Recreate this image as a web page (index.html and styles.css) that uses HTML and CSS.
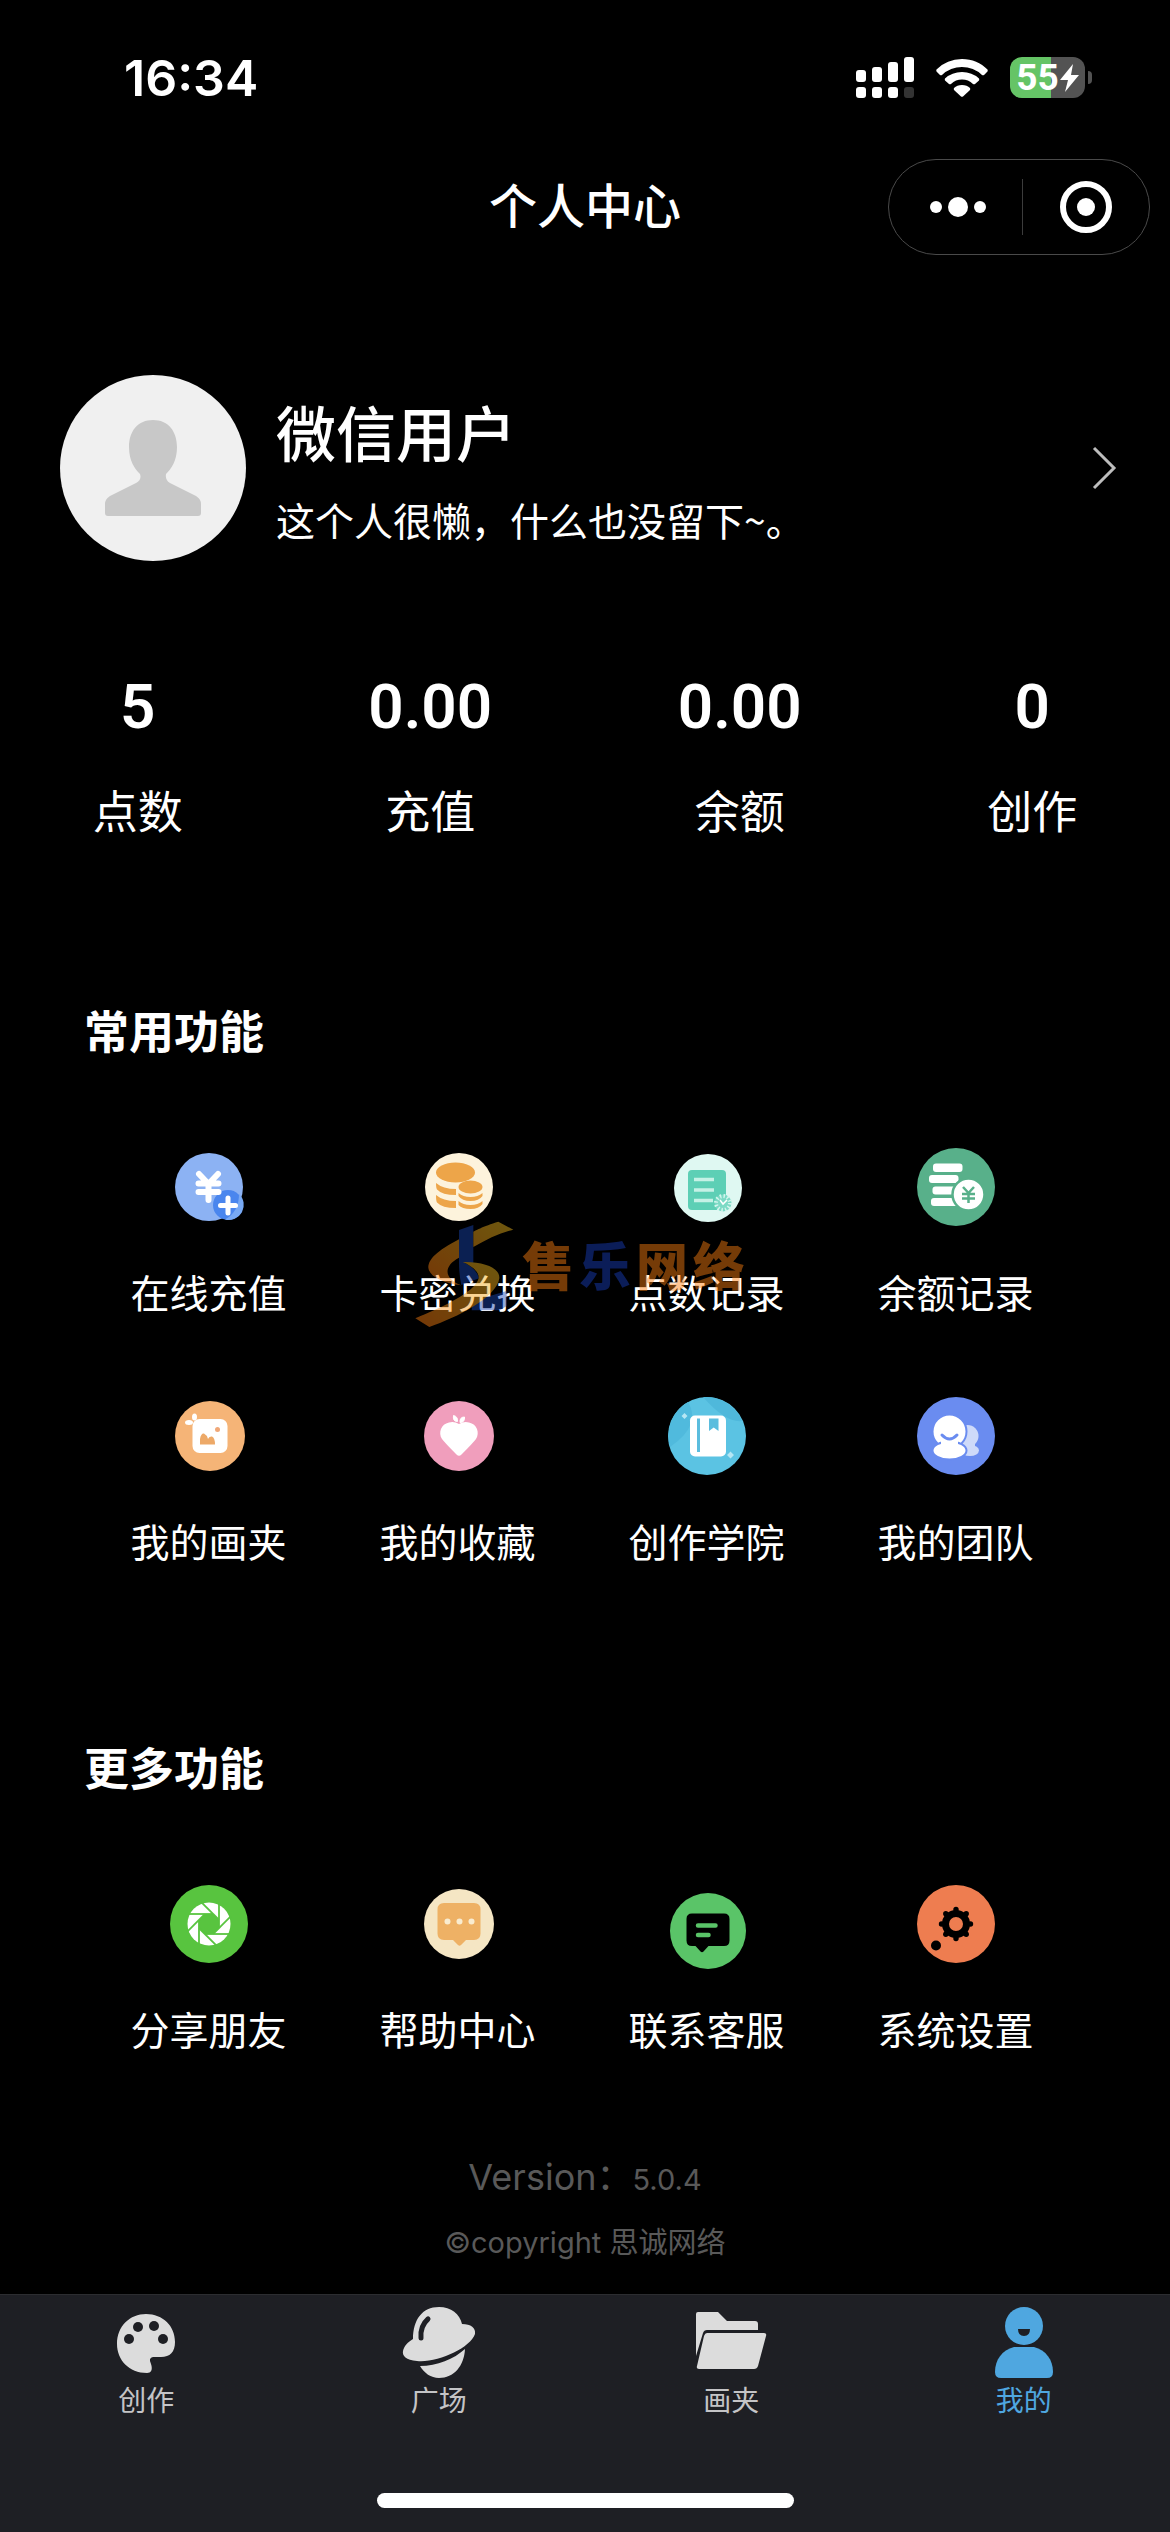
FILE: index.html
```html
<!DOCTYPE html>
<html lang="zh-CN">
<head>
<meta charset="utf-8">
<meta name="viewport" content="width=device-width, initial-scale=1">
<title>个人中心</title>
<link rel="stylesheet" href="styles.css">
</head>
<body>
<div class="status-bar">
  <time class="clock">16:34</time>
  <div class="status-icons">
    <svg class="signal" viewBox="0 0 58 41" fill="#fff">
      <rect x="0" y="13" width="10" height="12" rx="3"/><rect x="16" y="10" width="10" height="15" rx="3"/><rect x="32" y="5" width="10" height="20" rx="3"/><rect x="48" y="0" width="10" height="25" rx="3"/>
      <rect x="0" y="30" width="10" height="11" rx="3"/><rect x="16" y="30" width="10" height="11" rx="3"/><rect x="32" y="30" width="10" height="11" rx="3"/><rect x="48" y="30" width="10" height="11" rx="3" fill="#333"/>
    </svg>
    <svg class="wifi" viewBox="0 0 52 38" fill="#fff">
      <path d="M26 0C36 0 45 4 51.500 10.500Q52 11.500 51.500 12.500L48 16Q47 16.500 46 16A29 29 0 0 0 6 16Q5 16.500 4 16L.5 12.500Q0 11.500 .5 10.500A36 36 0 0 1 26 0Z"/>
      <path d="M26 13Q36 13 43 19.500Q43.500 20.500 43 21.500L39 25Q38 25.500 37 25A16 16 0 0 0 15 25Q14 25.500 13 25L9 21.500Q8.500 20.500 9 19.500Q16 13 26 13Z"/>
      <path d="M26 26Q31 26 34 29Q34.500 30 34 31L27 37.500Q26 38.200 25 37.500L18 31Q17.500 30 18 29Q21 26 26 26Z"/>
    </svg>
    <div class="battery">
      <span class="battery-body"><span>55</span>
        <svg class="bolt" viewBox="0 0 19 28" fill="#fff"><path d="M13 0L0 16h8L5 28 19 11h-8Z"/></svg>
      </span>
      <span class="battery-cap"></span>
    </div>
  </div>
</div>

<header class="nav-bar">
  <h1>个人中心</h1>
  <div class="capsule">
    <button class="more" type="button" aria-label="更多">
      <svg width="58" height="20" viewBox="0 0 58 20" fill="#fff"><circle cx="7" cy="10" r="6"/><circle cx="29" cy="10" r="10"/><circle cx="51" cy="10" r="6"/></svg>
    </button>
    <span class="capsule-line"></span>
    <button type="button" aria-label="关闭">
      <svg width="52" height="52" viewBox="0 0 52 52"><circle cx="26" cy="26" r="23" fill="none" stroke="#fff" stroke-width="6"/><circle cx="26" cy="26" r="9" fill="#fff"/></svg>
    </button>
  </div>
</header>

<main>
  <a class="profile" href="#profile">
    <svg class="avatar" viewBox="0 0 186 186">
      <circle cx="93" cy="93" r="93" fill="#f0f0f0"/>
      <path d="M93 45C108 45 117 56 117 72C117 86 111 94 106 99Q105 105 110 108L136 121Q141 124 141 129V138Q141 141 138 141H48Q45 141 45 138V129Q45 124 50 121L76 108Q82 105 80 99C75 94 69 86 69 72C69 56 78 45 93 45Z" fill="#c8c8c8"/>
    </svg>
    <span class="profile-text">
      <strong>微信用户</strong>
      <span>这个人很懒，什么也没留下~。</span>
    </span>
    <svg class="chevron" viewBox="0 0 24 42" fill="none" stroke="#bdbdbd" stroke-width="3"><path d="M2 1L22 21 2 41"/></svg>
  </a>

  <dl class="stats">
    <div><dd>5</dd><dt>点数</dt></div>
    <div><dd>0.00</dd><dt>充值</dt></div>
    <div><dd>0.00</dd><dt>余额</dt></div>
    <div><dd>0</dd><dt>创作</dt></div>
  </dl>

  <section class="group">
    <h2>常用功能</h2>
    <div class="grid">
      <a href="#recharge">
        <svg class="icon" viewBox="0 0 78 78">
          <circle cx="39" cy="39" r="34" fill="#8cb2f3"/>
          <circle cx="58" cy="57" r="15" fill="#4a86ee"/>
          <path d="M69 46a15 15 0 0 1-14 25.500Q69 64 69 46Z" fill="#78a9f4"/>
          <g fill="none" stroke="#fff" stroke-linecap="round" stroke-width="6"><path d="M29 26l9.500 10L48 26M28.500 35.500h20M28.500 44h20M38.500 36v16"/><path d="M50.500 57.500h15M58 50v15" stroke-width="5"/></g>
        </svg>
        <span>在线充值</span>
      </a>
      <a href="#redeem">
        <svg class="icon" viewBox="0 0 78 78">
          <circle cx="40" cy="39" r="34" fill="#fdf3dc"/>
          <g fill="#eda549"><ellipse cx="36.500" cy="24.500" rx="19.500" ry="10"/>
          <path d="M17 35Q24 41 37 41V47Q23 47 18 41.500Q17 40 17 35ZM17 47Q24 53 37 53V60Q23 60 18 54.500Q17 53 17 47Z"/>
          <ellipse cx="51.500" cy="39" rx="12" ry="6.500"/>
          <path d="M39.500 45Q44 49 51.500 49T63.500 45V48Q60 53 51.500 53T39.500 48ZM39.500 53Q44 57 51.500 57T63.500 53V56Q60 61 51.500 61T39.500 57Z"/></g>
        </svg>
        <span>卡密兑换</span>
      </a>
      <a href="#points">
        <svg class="icon" viewBox="0 0 78 78">
          <circle cx="40" cy="40" r="34" fill="#dff8f2"/>
          <rect x="20" y="22" width="38" height="40" rx="4" fill="#5dcfb5"/>
          <path d="M26 31.500h20M26 42h20M26 52.500h19" stroke="#c5f1e6" stroke-width="3.500"/>
          <circle cx="55" cy="55" r="8.500" fill="#7cdac5"/>
          <circle cx="55" cy="55" r="7" fill="none" stroke="#d4f6ee" stroke-width="4" stroke-dasharray="1.500 2.200"/>
          <path d="M52 52l3 4 4-4" fill="none" stroke="#fff" stroke-width="1.500"/>
        </svg>
        <span>点数记录</span>
      </a>
      <a href="#balance">
        <svg class="icon" viewBox="0 0 78 78">
          <circle cx="39" cy="39" r="39" fill="#58b08a"/>
          <g fill="#fff"><rect x="16" y="15.500" width="29.500" height="8.500" rx="3"/><rect x="12" y="27" width="29.500" height="8" rx="3"/><rect x="15.500" y="38.500" width="24" height="8" rx="3"/><rect x="14" y="50" width="28" height="8" rx="3"/></g>
          <circle cx="51.500" cy="46.500" r="16" fill="#fff" stroke="#58b08a" stroke-width="2.500"/>
          <path d="M46 39l5.500 6 5.500-6M45 46h13M45 50.500h13M51.500 45v10" fill="none" stroke="#58b08a" stroke-width="2.500"/>
        </svg>
        <span>余额记录</span>
      </a>
      <a href="#albums">
        <svg class="icon" viewBox="0 0 78 78">
          <circle cx="40" cy="39" r="35" fill="#f5b477"/>
          <rect x="22.500" y="22" width="35" height="34" rx="7" fill="#fff"/>
          <g fill="#fff"><ellipse cx="19" cy="25.500" rx="4" ry="2.500"/><ellipse cx="24.500" cy="20" rx="2.500" ry="3.500"/></g>
          <path d="M30 47.500V42Q31 36 34 36.500Q37 38 38 42Q39 39 42 39.500Q45 41 45 47.500Z" fill="#eda968"/><circle cx="47.500" cy="32.500" r="2.500" fill="#f0a878"/>
        </svg>
        <span>我的画夹</span>
      </a>
      <a href="#favorites">
        <svg class="icon" viewBox="0 0 78 78">
          <circle cx="40" cy="39" r="35" fill="#f09ebc"/>
          <path d="M40 27Q45 24 50 25.500C58 27 61 36 57 42Q54 46 42.500 57.500Q40 60 37.500 57.500Q26 46 23 42C19 36 22 27 30 25.500Q35 24 40 27Z" fill="#fff"/>
          <path d="M34.500 18.500q4.500 1 4 6-5 0-4-6ZM45.500 20q-5 0-4.500 5.500 5 0 4.500-5.500Z" fill="#fff" stroke="#fff"/>
        </svg>
        <span>我的收藏</span>
      </a>
      <a href="#academy">
        <svg class="icon" viewBox="0 0 78 78">
          <circle cx="39" cy="39" r="39" fill="#5bc3e3"/>
          <path d="M2 50A39 39 0 0 1 20 5Q34 28 2 50Z" fill="#50badd"/><path d="M35 0A39 39 0 0 1 74 24Q58 26 35 0Z" fill="#4fb8db"/>
          <rect x="22" y="18.500" width="36" height="41" rx="5" fill="#fff"/>
          <path d="M30.500 21.500v33.500" stroke="#5bbdde" stroke-width="3"/><path d="M41 21.500h9.500V34l-4.800-3.500L41 34Z" fill="#5bbdde"/>
          <path d="M16.500 16l3 3-3 3-3-3ZM62.500 54.500l3.500 3.500-3.500 3.500-3.500-3.500Z" fill="#b5e6f4"/>
        </svg>
        <span>创作学院</span>
      </a>
      <a href="#team">
        <svg class="icon" viewBox="0 0 78 78">
          <circle cx="39" cy="39" r="39" fill="#6a8cf0"/>
          <g fill="#cedaf9"><circle cx="50.500" cy="39" r="11"/><ellipse cx="53" cy="53.500" rx="9" ry="5.500"/><path d="M46 46h12v8H46Z"/></g>
          <g fill="#fff" stroke="#6a8cf0" stroke-width="2"><circle cx="32.500" cy="34.500" r="17"/><ellipse cx="32.500" cy="53.500" rx="17" ry="9"/></g>
          <path d="M24 42h17v8H24Z" fill="#fff"/>
          <path d="M25 38q7.500 8 15 0" fill="none" stroke="#6a8cf0" stroke-width="3" stroke-linecap="round"/>
        </svg>
        <span>我的团队</span>
      </a>
    </div>
  </section>

  <section class="group">
    <h2>更多功能</h2>
    <div class="grid">
      <a href="#share">
        <svg class="icon" viewBox="0 0 78 78">
          <circle cx="39" cy="39" r="39" fill="#58c43f"/>
          <circle cx="39" cy="39" r="21.500" fill="#fff"/>
          <g transform="translate(39 39)"><path d="M4.100 -10L10 -4.100V4.100L4.100 10H-4.100L-10 4.100V-4.100L-4.100 -10Z" fill="#58c43f"/>
          <path id="blade" d="M10 -21V4" stroke="#58c43f" stroke-width="1.800"/><use href="#blade" transform="rotate(45)"/><use href="#blade" transform="rotate(90)"/><use href="#blade" transform="rotate(135)"/><use href="#blade" transform="rotate(180)"/><use href="#blade" transform="rotate(225)"/><use href="#blade" transform="rotate(270)"/><use href="#blade" transform="rotate(315)"/></g>
        </svg>
        <span>分享朋友</span>
      </a>
      <a href="#help">
        <svg class="icon" viewBox="0 0 78 78">
          <circle cx="40" cy="39" r="35" fill="#f5e6c4"/>
          <path d="M25 18H55Q61.500 18 61.500 24.500V48.500Q61.500 55 55 55H47L42 60Q40.500 61.500 39 60L34 55H25Q18.500 55 18.500 48.500V24.500Q18.500 18 25 18Z" fill="#eeb165"/>
          <g fill="#f9ecd0"><circle cx="28.500" cy="36.500" r="3"/><circle cx="40.500" cy="36.500" r="3"/><circle cx="52.500" cy="36.500" r="3"/></g>
        </svg>
        <span>帮助中心</span>
      </a>
      <a href="#service">
        <svg class="icon" viewBox="0 0 78 78">
          <circle cx="40" cy="46" r="38" fill="#5ac468"/>
          <path d="M24 28.500H56Q61.500 28.500 61.500 34V55.500Q61.500 61 56 61H40.500L35.500 66.500Q34 68 32.500 66.500L27.500 61H24Q18.500 61 18.500 55.500V34Q18.500 28.500 24 28.500Z" fill="#000"/>
          <path d="M30 40.500h17.500M30 50h10.500" stroke="#5ac468" stroke-width="4.500" stroke-linecap="round"/>
        </svg>
        <span>联系客服</span>
      </a>
      <a href="#settings">
        <svg class="icon" viewBox="0 0 78 78">
          <circle cx="39" cy="39" r="39" fill="#ee7d50"/>
          <circle cx="39" cy="39" r="10.500" fill="none" stroke="#000" stroke-width="7"/>
          <g fill="#000"><circle cx="39" cy="24.500" r="2.700"/><circle cx="49.200" cy="28.800" r="2.700"/><circle cx="53.500" cy="39" r="2.700"/><circle cx="49.200" cy="49.200" r="2.700"/><circle cx="39" cy="53.500" r="2.700"/><circle cx="28.800" cy="49.200" r="2.700"/><circle cx="24.500" cy="39" r="2.700"/><circle cx="28.800" cy="28.800" r="2.700"/><circle cx="19" cy="60.500" r="5"/></g>
        </svg>
        <span>系统设置</span>
      </a>
    </div>
  </section>

  <footer class="about">
    <p class="version">Version：<small>5.0.4</small></p>
    <p class="copyright">©copyright 思诚网络</p>
  </footer>

  <div class="watermark">
    <svg viewBox="45 88 300 322">
      <defs><linearGradient id="gold" x1="0" y1="1" x2="1" y2="0"><stop offset="0" stop-color="#ff7a10"/><stop offset="1" stop-color="#f0c020"/></linearGradient></defs>
      <path d="M177 117L220 102V218L177 214ZM177 214L190 213Q232 235 237 262L184 282Q177 250 177 214ZM218 330L320 300V345L300 358H215Z" fill="#1846b4"/>
      <path d="M295 92C250 105 220 122 220 122V168C260 145 300 125 340 116ZM177 145C110 180 85 205 85 230C88 258 130 276 184 283C130 262 130 225 177 200Z" fill="url(#gold)"/>
      <path d="M188 213C250 211 300 230 298 262C290 320 170 380 88 408L46 382C120 352 225 305 236 262C238 240 210 222 188 213Z" fill="url(#gold)"/>
    </svg>
    <div class="brand"><span>售</span><b>乐</b><span>网</span><span>络</span></div>
  </div>
</main>

<nav class="tab-bar">
  <div class="tabs">
    <a href="#create">
      <svg viewBox="0 0 74 74"><path d="M37 8C54 8 66 20 66 36C66 46 61 51 52 51H44Q39 52 42 58C44 64 42 67 38 67C20 67 8 54 8 38C8 20 21 8 37 8Z" fill="#dcdcdc"/><g fill="#1e1f24"><circle cx="29" cy="21" r="5"/><circle cx="45" cy="20" r="5"/><circle cx="20" cy="33" r="5"/><circle cx="54" cy="33" r="5"/></g></svg>
      <span>创作</span>
    </a>
    <a href="#plaza">
      <svg viewBox="0 0 74 74"><path d="M37 1C49 1 58 8 60 18C69 18 74 22 73 28C68 42 36 57 15 55C4 54 0 50 1 45C2 40 6 36 11 33C11 14 20 1 37 1Z" fill="#dcdcdc"/><path d="M18 60C35 60 52 53 63 43C62 60 52 72 37 72C29 72 22 67 18 60Z" fill="#dcdcdc"/><path d="M26 13Q18 20 19 32" fill="none" stroke="#1e1f24" stroke-width="5" stroke-linecap="round"/></svg>
      <span>广场</span>
    </a>
    <a href="#folder">
      <svg viewBox="0 0 74 74"><path d="M2 8Q2 6 4 6H24L33 15H61Q64 15 64 18V24H13Q10 24 9 27L2 50Z" fill="#dcdcdc"/><path d="M13 27H70Q73 27 72 30L64 60Q63 63 60 63H5Q2 63 3 60L10 30Q11 27 13 27Z" fill="#dcdcdc"/></svg>
      <span>画夹</span>
    </a>
    <a class="active" href="#me" aria-current="page">
      <svg viewBox="0 0 74 74"><circle cx="37" cy="20" r="19" fill="#4fa7e0"/><path d="M31 23H43Q43 30 37 30T31 23Z" fill="#1e1f24"/><path d="M27 41H47C59 44 66 54 66 66Q66 72 60 72H14Q8 72 8 66C8 54 15 44 27 41Z" fill="#4fa7e0"/></svg>
      <span>我的</span>
    </a>
  </div>
  <div class="home-indicator"></div>
</nav>
</body>
</html>
```
FILE: styles.css
```css
* {
  box-sizing: border-box;
  margin: 0;
  padding: 0;
}

body {
  display: flex;
  flex-direction: column;
  min-height: 100vh;
  background: #000;
  color: #fff;
  font-family: Inter, "Noto Sans CJK SC", sans-serif;
}

a {
  color: inherit;
  text-decoration: none;
}

svg {
  display: block;
  overflow: visible;
}

.status-bar {
  display: flex;
  justify-content: space-between;
  align-items: center;
  height: 141px;
  padding: 14px 78px 0 124px;
}

.clock {
  font-size: 50px;
  font-weight: 600;
  line-height: 60px;
}

.status-icons,
.battery {
  display: flex;
  align-items: center;
}

.status-icons {
  gap: 22px;
}

.signal {
  width: 58px;
  height: 41px;
}

.wifi {
  width: 52px;
  height: 38px;
}

.battery {
  gap: 3px;
}

.battery-body {
  display: flex;
  justify-content: center;
  align-items: center;
  gap: 1px;
  width: 75px;
  height: 41px;
  border-radius: 12px;
  background: linear-gradient(90deg, #65c466 55%, #535353 55%);
  font-family: Roboto, sans-serif;
  font-size: 37px;
  font-weight: 700;
}

.bolt {
  width: 19px;
  height: 28px;
}

.battery-cap {
  width: 4px;
  height: 13px;
  border-radius: 0 4px 4px 0;
  background: #535353;
}

.nav-bar {
  display: grid;
  grid-template-columns: 1fr auto 1fr;
  align-items: center;
  height: 132px;
  padding: 0 20px;
}

h1 {
  grid-column: 2;
  font-size: 48px;
  font-weight: 500;
  line-height: 60px;
}

.capsule {
  display: flex;
  justify-self: end;
  align-items: center;
  width: 262px;
  height: 96px;
  border: 1px solid #4a4a4a;
  border-radius: 48px;
}

.capsule button {
  display: flex;
  flex: 1;
  justify-content: center;
  align-items: center;
  height: 100%;
  border: 0;
  background: none;
}

.capsule .more {
  padding-left: 6px;
}

.capsule-line {
  width: 1px;
  height: 56px;
  background: #3c3c3c;
}

main {
  position: relative;
  flex: 1;
  padding-bottom: 28px;
}

.profile {
  display: flex;
  align-items: center;
  gap: 30px;
  padding: 102px 54px 0 60px;
}

.avatar {
  width: 186px;
  height: 186px;
}

.profile-text {
  display: flex;
  flex: 1;
  flex-direction: column;
  gap: 16px;
  padding-top: 6px;
}

.profile-text strong {
  font-size: 60px;
  font-weight: 500;
  line-height: 80px;
}

.profile-text span {
  font-family: "Noto Sans CJK SC", sans-serif;
  font-size: 39px;
  line-height: 56px;
}

.chevron {
  width: 24px;
  height: 42px;
}

.stats {
  display: flex;
  justify-content: space-around;
  margin-top: 110px;
  text-align: center;
}

.stats div {
  display: flex;
  flex-direction: column;
  gap: 40px;
}

.stats dd {
  font-family: Roboto, sans-serif;
  font-size: 62px;
  font-weight: 600;
  line-height: 72px;
}

.stats dt {
  font-size: 45px;
  line-height: 60px;
}

.group {
  padding: 160px 90px 0 84px;
}

.group + .group {
  padding-top: 169px;
}

h2 {
  font-size: 45px;
  font-weight: 700;
  line-height: 60px;
}

.grid {
  display: grid;
  grid-template-columns: repeat(4, 1fr);
  row-gap: 75px;
  margin-top: 85px;
}

.grid a {
  display: flex;
  flex-direction: column;
  align-items: center;
  gap: 40px;
  font-size: 39px;
  line-height: 56px;
}

.icon {
  width: 78px;
  height: 78px;
}

.about {
  margin-top: 88px;
  color: #595959;
  text-align: center;
}

.version {
  font-size: 36px;
  line-height: 60px;
}

.version small {
  font-size: 29px;
}

.copyright {
  margin-top: 13px;
  font-size: 29px;
  line-height: 40px;
}

.watermark {
  position: absolute;
  top: 947px;
  left: 415px;
  display: flex;
  align-items: center;
  gap: 7px;
  color: #ff8010;
  opacity: 0.46;
  pointer-events: none;
}

.watermark svg {
  width: 100px;
  height: 108px;
}

.brand {
  display: flex;
  gap: 5px;
  padding-bottom: 12px;
  font-size: 52px;
  font-weight: 900;
  line-height: 60px;
}

.brand b {
  color: #1a3fc0;
  font-weight: 900;
}

.tab-bar {
  padding: 11px 0 24px;
  border-top: 1px solid #2c2d30;
  background: #1e1f24;
}

.tabs {
  display: grid;
  grid-template-columns: repeat(4, 1fr);
}

.tabs a {
  display: flex;
  flex-direction: column;
  align-items: center;
  color: #c4c4c6;
  font-size: 28px;
  line-height: 42px;
}

.tabs svg {
  width: 74px;
  height: 74px;
}

.tabs .active {
  color: #4fa7e0;
}

.home-indicator {
  width: 417px;
  height: 15px;
  margin: 71px auto 0;
  border-radius: 8px;
  background: #fff;
}
```
